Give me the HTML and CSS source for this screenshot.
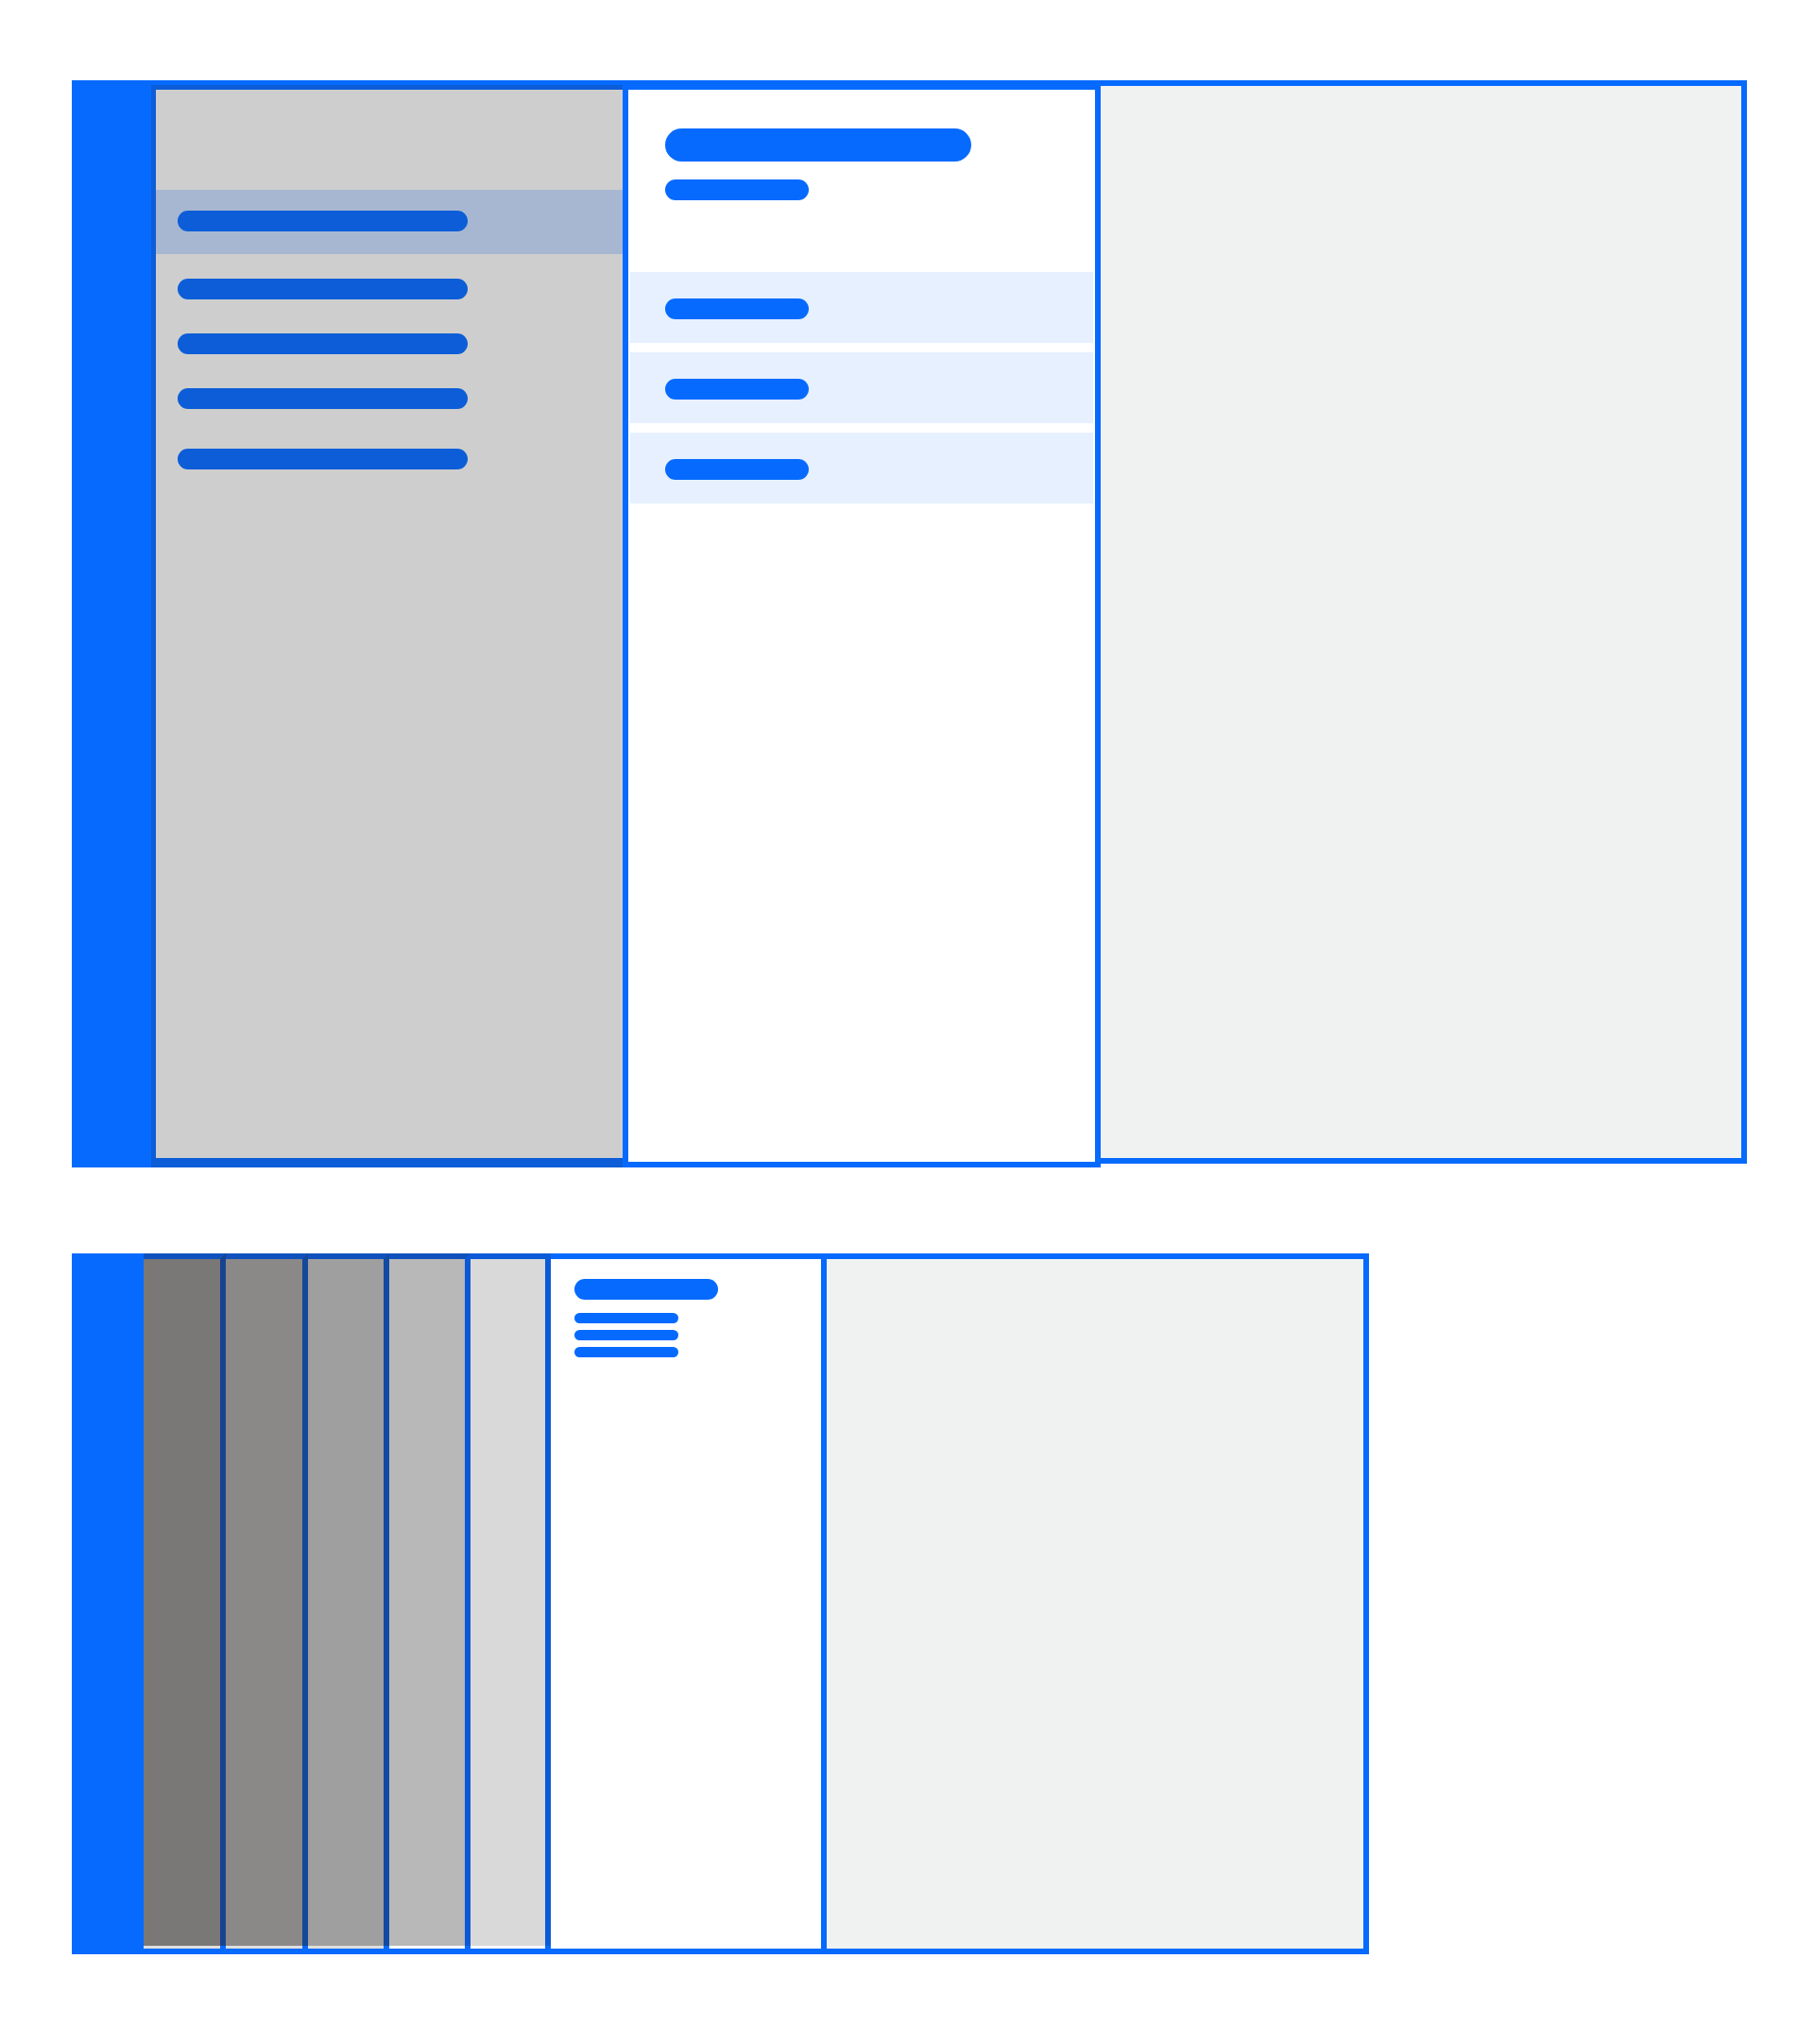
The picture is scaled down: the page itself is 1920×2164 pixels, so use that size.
FILE: index.html
```
<!DOCTYPE html>
<html lang="en">

<head>
  <meta charset="utf-8">
  <title>Panel navigation wireframe</title>
  <link rel="stylesheet" href="styles.css">
</head>

<body>

  <main class="page">

    <!-- one parent level, one open panel -->
    <section class="frame frame-large">
      <div class="rail"></div>
      <div class="parent">
        <div class="parent-inner">
          <div class="parent-active">
            <div class="bar"></div>
          </div>
          <div class="parent-list">
            <div class="bar"></div>
            <div class="bar"></div>
            <div class="bar"></div>
            <div class="bar bar-last"></div>
          </div>
        </div>
      </div>
      <div class="panel">
        <div class="panel-head">
          <div class="bar bar-title"></div>
          <div class="bar bar-short"></div>
        </div>
        <div class="rows">
          <div class="row"><div class="bar bar-short"></div></div>
          <div class="row"><div class="bar bar-short"></div></div>
          <div class="row"><div class="bar bar-short"></div></div>
        </div>
      </div>
      <div class="canvas"></div>
    </section>

    <!-- five stacked levels, one open panel -->
    <section class="frame frame-small">
      <div class="rail"></div>
      <div class="level level-1"><div class="shade"></div></div>
      <div class="level level-2"><div class="shade"></div></div>
      <div class="level level-3"><div class="shade"></div></div>
      <div class="level level-4"><div class="shade"></div></div>
      <div class="level level-5"><div class="shade"></div></div>
      <div class="panel">
        <div class="bar bar-short"></div>
        <div class="lines">
          <div class="bar bar-thin"></div>
          <div class="bar bar-thin"></div>
          <div class="bar bar-thin"></div>
        </div>
      </div>
      <div class="canvas"></div>
    </section>

  </main>

</body>

</html>
```

FILE: styles.css
```
:root {
  --blue: #066aff;
  --blue-dim: #0c5dd7;
}

* {
  box-sizing: border-box;
}

body {
  margin: 0;
  background: #fff;
  font-family: "Liberation Sans", sans-serif;
}

.page {
  display: flex;
  flex-direction: column;
  gap: 91px;
  padding: 85px 71px 95px 76px;
}

.frame {
  display: grid;
}

.frame-large {
  grid-template-columns: 84px 499fr 506fr 684fr;
  min-height: 1151px;
}

.frame-small {
  grid-template-columns: 76px 87fr 87fr 86fr 86fr 85fr 292fr 574fr;
  width: calc(100% - 400px);
  min-height: 742px;
}

.rail {
  background: var(--blue);
}

.canvas {
  background: #f0f2f1;
  border: 6px solid var(--blue);
  border-left: 0;
}

.bar {
  height: 22px;
  border-radius: 11px;
  background: var(--blue);
}

.bar-title {
  width: 324px;
  height: 35px;
  border-radius: 18px;
}

.bar-short {
  width: 152px;
}

.bar-thin {
  width: 110px;
  height: 11px;
}

/* large frame */

.frame-large .canvas {
  margin-bottom: 4px;
}

.parent {
  display: flex;
  border-top: 5px solid var(--blue);
}

.parent-inner {
  flex: 1;
  padding-top: 106px;
  background: #cecece;
  border: solid var(--blue-dim);
  border-width: 5px 0 10px 5px;
}

.parent .bar {
  width: 307px;
  background: var(--blue-dim);
}

.parent-active {
  padding: 22px 23px 24px;
  background: #a7b7d1;
}

.parent-list {
  display: flex;
  flex-direction: column;
  gap: 36px;
  padding: 26px 23px;
}

.bar-last {
  margin-top: 6px;
}

.frame-large .panel {
  border: 6px solid var(--blue);
  border-top-width: 10px;
}

.panel-head {
  display: flex;
  flex-direction: column;
  gap: 19px;
  padding: 41px 39px 76px;
}

.rows {
  display: flex;
  flex-direction: column;
  gap: 10px;
  padding: 0 2px;
}

.row {
  padding: 28px 37px 25px;
  background: #e6f0ff;
}

/* small frame */

.level {
  display: flex;
  flex-direction: column;
  background: #fff;
  border-bottom: 6px solid var(--blue);
}

.level::after {
  content: "";
  height: 3px;
  border-right: 6px solid var(--blue);
}

.shade {
  flex: 1;
  border: solid #0f52bd;
  border-width: 6px 6px 0 0;
}

.level-1,
.level-2,
.level-3 {
  background: #dedede;
}

.level-1 .shade {
  background: #7a7777;
  border-right-color: #18438f;
}

.level-2 .shade {
  background: #8b8888;
  border-right-color: #144899;
}

.level-3 .shade {
  background: #9f9f9f;
  border-right-color: #114aa3;
}

.level-4 .shade {
  background: #b8b8b8;
  border-right-color: #0b59d4;
}

.level-5 .shade {
  background: #d9d9d9;
  border-color: #0b5bd8;
}

.frame-small .panel {
  padding: 21px 25px;
  border: solid var(--blue);
  border-width: 6px 6px 6px 0;
}

.lines {
  display: flex;
  flex-direction: column;
  gap: 7px;
  padding-top: 14px;
}
```
